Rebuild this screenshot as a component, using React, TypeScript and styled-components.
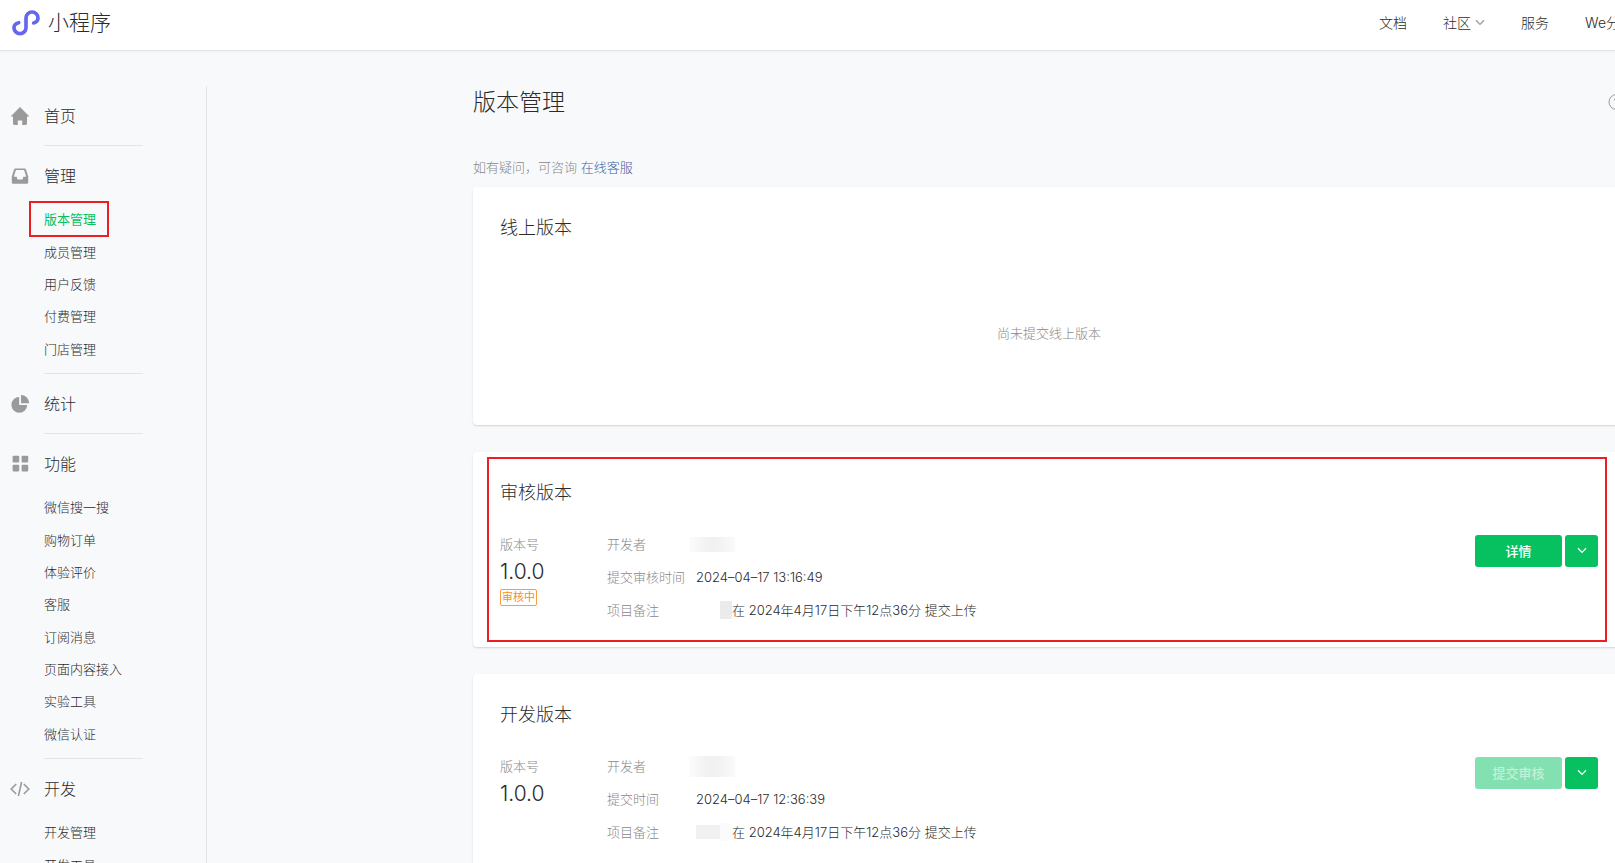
import React from "react";
import styled, { createGlobalStyle } from "styled-components";

const green = "#07c160";
const markRed = "#ee1c25";

const GlobalStyle = createGlobalStyle`
  * { box-sizing: border-box; }
  body {
    margin: 0;
    background: #f8f9fb;
    color: #2b2b2b;
    font-family: Inter, "Noto Sans CJK SC", sans-serif;
    font-size: 13px;
    font-weight: 300;
  }
  h1, h2, h3, ul, dl, dd, dt, p { margin: 0; padding: 0; font-weight: inherit; }
  ul { list-style: none; }
  a { color: inherit; text-decoration: none; }
  button { font: inherit; border: 0; padding: 0; cursor: pointer; }
`;

const Page = styled.div`
  display: flex;
  flex-direction: column;
  height: 100vh;
  overflow: hidden;
`;

const Header = styled.header`
  flex: none;
  display: flex;
  align-items: center;
  height: 51px;
  padding: 0 0 5px 12px;
  background: #fff;
  border-bottom: 1px solid #e2e4e7;
  box-shadow: 0 1px 2px rgba(0, 0, 0, 0.04);
`;

const Brand = styled.a`
  display: flex;
  align-items: center;
  gap: 8px;
  font-size: 21px;
  line-height: 30px;
`;

const TopNav = styled.nav`
  display: flex;
  gap: 36px;
  margin-left: auto;
  margin-right: -19px;
  font-size: 14px;
  line-height: 20px;
  white-space: nowrap;
`;

const TopLink = styled.a`
  display: flex;
  align-items: center;
  gap: 4px;
`;

const Body = styled.div`
  flex: 1;
  display: flex;
  align-items: stretch;
  min-height: 0;
`;

const Sidebar = styled.nav`
  flex: none;
  width: 207px;
  margin-top: 35px;
  border-right: 1px solid #e4e5e8;
`;

const Group = styled.section`
  & + &::before {
    content: "";
    display: block;
    width: 99px;
    height: 1px;
    margin-left: 44px;
    background: #e4e5e8;
  }
`;

const GroupTitle = styled.h2`
  display: flex;
  align-items: center;
  gap: 14px;
  padding: 19px 0 18px 10px;
  font-size: 16px;
  line-height: 22px;

  svg { flex: none; }
`;

const ItemList = styled.ul`
  margin-top: -2px;
  padding: 0 0 8px 44px;
`;

const Item = styled.li`
  line-height: 32px;

  &:nth-child(3n + 2) { margin-top: 1px; }
`;

const ItemLink = styled.a<{ $current?: boolean }>`
  position: relative;
  color: ${(p) => (p.$current ? green : "inherit")};
  font-weight: ${(p) => (p.$current ? 400 : "inherit")};
`;

const ItemMark = styled.span`
  position: absolute;
  inset: -10px -13px -10px -15px;
  border: 2px solid ${markRed};
  pointer-events: none;
`;

const Main = styled.main`
  flex: 1;
  margin-right: -9px;
  padding: 34px 0 0 266px;
`;

const TitleRow = styled.div`
  display: flex;
  align-items: center;
  justify-content: space-between;
`;

const PageTitle = styled.h1`
  font-size: 23px;
  line-height: 34px;
`;

const HelpButton = styled.button`
  display: flex;
  background: none;
`;

const Hint = styled.p`
  margin: 38px 0 10px;
  line-height: 20px;
  color: #888;
`;

const HintLink = styled.a`
  color: #3f5d9e;
`;

const Cards = styled.div`
  display: flex;
  flex-direction: column;
  gap: 27px;
`;

const Card = styled.section`
  position: relative;
  padding: 28px 26px 26px 27px;
  background: #fff;
  border-radius: 4px;
  box-shadow: 0 1px 2px rgba(0, 0, 0, 0.15);
`;

const CardMark = styled.span`
  position: absolute;
  inset: 5px 17px 5px 14px;
  border: 2px solid ${markRed};
  pointer-events: none;
`;

const CardTitle = styled.h3`
  font-size: 18px;
  line-height: 26px;
`;

const Empty = styled.p`
  padding: 81px 0 55px;
  line-height: 22px;
  text-align: center;
  color: #888;
`;

const CardBody = styled.div`
  display: flex;
  align-items: flex-start;
  margin-top: 27px;
  line-height: 22px;
`;

const Version = styled.div`
  width: 107px;
`;

const Label = styled.div`
  color: #888;
`;

const VersionNumber = styled.div`
  font-size: 21px;
  line-height: 34px;
`;

const Badge = styled.span`
  display: block;
  width: max-content;
  padding: 0 1px;
  border: 1px solid #fa9d3b;
  border-radius: 2px;
  color: #fa8c1e;
  font-size: 11px;
  font-weight: 400;
  line-height: 15px;
`;

const Details = styled.dl`
  flex: 1;
  display: grid;
  grid-template-columns: 89px 1fr;
  row-gap: 11px;
`;

const Term = styled.dt`
  color: #888;
`;

const Value = styled.dd`
  display: flex;
  align-items: center;
  height: 22px;
`;

const BlurredName = styled.span<{ $height: number }>`
  width: 46px;
  height: ${(p) => p.$height}px;
  margin-left: -7px;
  background: linear-gradient(90deg, #fcfcfc, #f1f1f1 40%, #f1f1f1 60%, #fafafa);
`;

const Mosaic = styled.span<{ $width: number; $height: number; $color: string }>`
  width: ${(p) => p.$width}px;
  height: ${(p) => p.$height}px;
  background: ${(p) => p.$color};
`;

const Actions = styled.div`
  display: flex;
  gap: 3px;
  margin-top: 2px;
`;

const Button = styled.button`
  display: flex;
  align-items: center;
  justify-content: center;
  width: 87px;
  height: 32px;
  padding-bottom: 1px;
  border-radius: 3px;
  background: ${green};
  color: #fff;
  font-size: 13px;
  font-weight: 500;
  line-height: 20px;

  &:disabled {
    background: #83e0b0;
    color: rgba(255, 255, 255, 0.55);
    cursor: default;
  }
`;

const MenuButton = styled(Button)`
  width: 33px;
`;

const Logo = () => (
  <svg width="28" height="26" viewBox="36 29 84 78" fill="none" stroke="#6467ef" strokeWidth="11" strokeLinecap="round" aria-hidden="true">
    <path d="M56 67C47 69 42 75 42 82A18 18 0 0 0 78 82V53A18 18 0 0 1 114 53C114 60 109 66 101 68" />
  </svg>
);

const Chevron = ({ color, width = 10 }: { color: string; width?: number }) => (
  <svg width={width} height="7" viewBox="0 0 10 7" fill="none" stroke={color} strokeWidth="1.3" aria-hidden="true">
    <path d="M1 1.2L5 5.4L9 1.2" />
  </svg>
);

const HomeIcon = () => (
  <svg width="20" height="20" viewBox="0 0 20 20" fill="#9a9a9a" aria-hidden="true">
    <path d="M10 1L19.4 10.4H17V17.6Q17 19 15.6 19H12.2V14.6H7.8V19H4.4Q3 19 3 17.6V10.4H.6Z" />
  </svg>
);

const InboxIcon = () => (
  <svg width="20" height="20" viewBox="0 0 20 20" fill="#9a9a9a" fillRule="evenodd" aria-hidden="true">
    <path d="M5.6 2.4H14.4Q15.6 2.4 16 3.5L18.2 10.4V16.4Q18.2 17.8 16.8 17.8H3.2Q1.8 17.8 1.8 16.4V10.4L4 3.5Q4.4 2.4 5.6 2.4ZM5.9 4L3.8 10.7H6.4Q7 10.7 7 11.4V12.4Q7 13.5 8 13.5H12Q13 13.5 13 12.4V11.4Q13 10.7 13.6 10.7H16.2L14.1 4Z" />
  </svg>
);

const PieIcon = () => (
  <svg width="20" height="20" viewBox="0 0 20 20" fill="#9a9a9a" aria-hidden="true">
    <path d="M9.2 3A7.9 7.9 0 1 0 17.2 11H9.2Z" />
    <path d="M11 1A8.2 8.2 0 0 1 19.2 9.2H11Z" />
  </svg>
);

const GridIcon = () => (
  <svg width="20" height="20" viewBox="0 0 20 20" fill="#9a9a9a" aria-hidden="true">
    <rect x="2.6" y="1.8" width="6.6" height="6.6" rx="1" />
    <rect x="11.6" y="1.8" width="6.6" height="6.6" rx="1" />
    <rect x="2.6" y="10.8" width="6.6" height="6.6" rx="1" />
    <rect x="11.6" y="10.8" width="6.6" height="6.6" rx="1" />
  </svg>
);

const CodeIcon = () => (
  <svg width="20" height="20" viewBox="0 0 20 20" fill="none" stroke="#9a9a9a" strokeWidth="1.6" aria-hidden="true">
    <path d="M6.2 5L1.2 10L6.2 15M13.8 5L18.8 10L13.8 15M11.6 3L8.4 17" />
  </svg>
);

const HelpIcon = () => (
  <svg width="16" height="18" viewBox="0 0 16 18" fill="none" stroke="#9a9a9a" aria-hidden="true">
    <circle cx="8.5" cy="9" r="7.5" />
    <path d="M6.3 7.4Q6.3 5.2 8.5 5.2T10.7 7.2Q10.7 8.4 9.4 9.1Q8.5 9.7 8.5 10.8M8.5 12V13.2" />
  </svg>
);

const groups = [
  { title: "首页", icon: <HomeIcon />, items: [] },
  { title: "管理", icon: <InboxIcon />, items: ["版本管理", "成员管理", "用户反馈", "付费管理", "门店管理"] },
  { title: "统计", icon: <PieIcon />, items: [] },
  {
    title: "功能",
    icon: <GridIcon />,
    items: ["微信搜一搜", "购物订单", "体验评价", "客服", "订阅消息", "页面内容接入", "实验工具", "微信认证"],
  },
  { title: "开发", icon: <CodeIcon />, items: ["开发管理", "开发工具"] },
];

const currentItem = "版本管理";
const remark = "在 2024年4月17日下午12点36分 提交上传";

const SideMenu = () => (
  <Sidebar aria-label="侧边菜单">
    {groups.map((group) => (
      <Group key={group.title}>
        <GroupTitle>
          {group.icon}
          <a href="#">{group.title}</a>
        </GroupTitle>
        {group.items.length > 0 && (
          <ItemList>
            {group.items.map((name) => (
              <Item key={name}>
                <ItemLink href="#" $current={name === currentItem}>
                  {name}
                  {name === currentItem && <ItemMark />}
                </ItemLink>
              </Item>
            ))}
          </ItemList>
        )}
      </Group>
    ))}
  </Sidebar>
);

type VersionCardProps = {
  title: string;
  status?: string;
  timeLabel: string;
  time: string;
  nameHeight: number;
  mosaic: React.ReactNode;
  action: string;
  disabled?: boolean;
  marked?: boolean;
};

const VersionCard = (p: VersionCardProps) => (
  <Card>
    <CardTitle>{p.title}</CardTitle>
    <CardBody>
      <Version>
        <Label>版本号</Label>
        <VersionNumber>1.0.0</VersionNumber>
        {p.status && <Badge>{p.status}</Badge>}
      </Version>
      <Details>
        <Term>开发者</Term>
        <Value>
          <BlurredName $height={p.nameHeight} />
        </Value>
        <Term>{p.timeLabel}</Term>
        <Value>{p.time}</Value>
        <Term>项目备注</Term>
        <Value>
          {p.mosaic}
          {remark}
        </Value>
      </Details>
      <Actions>
        <Button type="button" disabled={p.disabled}>{p.action}</Button>
        <MenuButton type="button" aria-label="更多操作">
          <Chevron color="#fff" />
        </MenuButton>
      </Actions>
    </CardBody>
    {p.marked && <CardMark />}
  </Card>
);

export default function App() {
  return (
    <Page>
      <GlobalStyle />
      <Header>
        <Brand href="#">
          <Logo />
          小程序
        </Brand>
        <TopNav aria-label="顶部导航">
          <TopLink href="#">文档</TopLink>
          <TopLink href="#">
            社区
            <Chevron color="#9a9a9a" />
          </TopLink>
          <TopLink href="#">服务</TopLink>
          <TopLink href="#">We分析</TopLink>
        </TopNav>
      </Header>
      <Body>
        <SideMenu />
        <Main>
          <TitleRow>
            <PageTitle>版本管理</PageTitle>
            <HelpButton type="button" aria-label="帮助">
              <HelpIcon />
            </HelpButton>
          </TitleRow>
          <Hint>
            如有疑问，可咨询 <HintLink href="#">在线客服</HintLink>
          </Hint>
          <Cards>
            <Card>
              <CardTitle>线上版本</CardTitle>
              <Empty>尚未提交线上版本</Empty>
            </Card>
            <VersionCard
              title="审核版本"
              status="审核中"
              timeLabel="提交审核时间"
              time="2024–04–17 13:16:49"
              nameHeight={15}
              mosaic={
                <>
                  <Mosaic $width={24} $height={18} $color="#fff" />
                  <Mosaic $width={12} $height={18} $color="#ebebeb" />
                </>
              }
              action="详情"
              marked
            />
            <VersionCard
              title="开发版本"
              timeLabel="提交时间"
              time="2024–04–17 12:36:39"
              nameHeight={21}
              mosaic={
                <>
                  <Mosaic $width={24} $height={14} $color="#f1f1f1" />
                  <Mosaic $width={12} $height={18} $color="#fbfbfb" />
                </>
              }
              action="提交审核"
              disabled
            />
          </Cards>
        </Main>
      </Body>
    </Page>
  );
}
